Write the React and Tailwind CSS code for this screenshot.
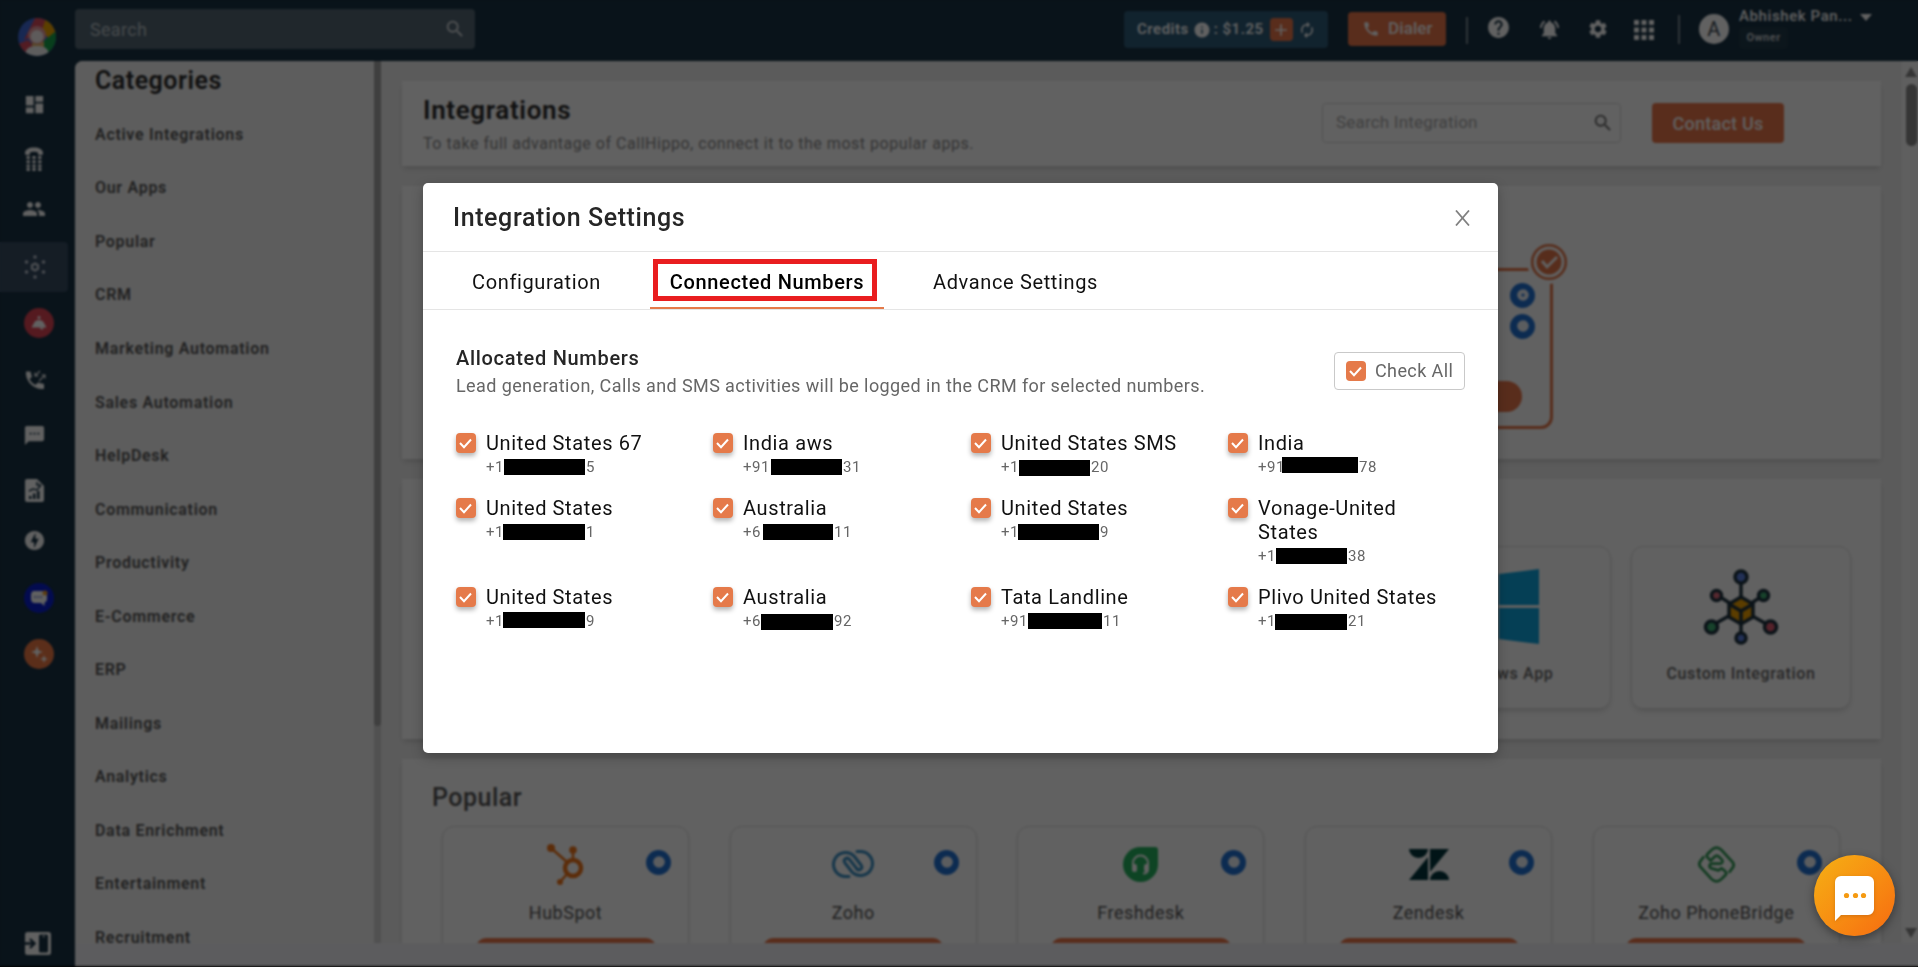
import React from 'react';
import {
  MdDashboard,
  MdGroup,
  MdSms,
  MdOfflineBolt,
  MdSearch,
  MdInfo,
  MdAdd,
  MdAutorenew,
  MdCall,
  MdHelp,
  MdNotificationsActive,
  MdSettings,
  MdApps,
} from 'react-icons/md';

const categories = [
  'Active Integrations',
  'Our Apps',
  'Popular',
  'CRM',
  'Marketing Automation',
  'Sales Automation',
  'HelpDesk',
  'Communication',
  'Productivity',
  'E-Commerce',
  'ERP',
  'Mailings',
  'Analytics',
  'Data Enrichment',
  'Entertainment',
  'Recruitment',
];

// start / end are the visible digits, pad and bar size the masked part
const numbers = [
  { name: 'United States 67', start: '+1', pad: 18, bar: 81, end: '5', top: 0 },
  { name: 'India aws', start: '+91', pad: 28, bar: 71, end: '31', top: 0 },
  { name: 'United States SMS', start: '+1', pad: 18, bar: 71, end: '20', top: 1 },
  { name: 'India', start: '+91', pad: 24, bar: 76, end: '78', top: -2 },
  { name: 'United States', start: '+1', pad: 17, bar: 82, end: '1', top: 0 },
  { name: 'Australia', start: '+6', pad: 20, bar: 70, end: '11', top: 0 },
  { name: 'United States', start: '+1', pad: 17, bar: 81, end: '9', top: 0 },
  { name: 'Vonage-United States', start: '+1', pad: 18, bar: 71, end: '38', top: 0 },
  { name: 'United States', start: '+1', pad: 17, bar: 82, end: '9', top: -1 },
  { name: 'Australia', start: '+6', pad: 18, bar: 72, end: '92', top: 1 },
  { name: 'Tata Landline', start: '+91', pad: 27, bar: 74, end: '11', top: 0 },
  { name: 'Plivo United States', start: '+1', pad: 17, bar: 72, end: '21', top: 1 },
];

function LogoIcon() {
  return (
    <svg className="w-[38px] h-[38px]" viewBox="0 0 38 38">
      <clipPath id="logo">
        <circle cx="19" cy="19" r="19" />
      </clipPath>
      <g clipPath="url(#logo)">
        <rect width="38" height="38" fill="#3f6ad8" />
        <path d="M17 0H30L24 14 6 22Z" fill="#d84a5c" />
        <path d="M28 0H38V15L30 20 24 12Z" fill="#f0a500" />
        <path d="M38 13V38H28L22 26Z" fill="#16a34a" />
        <path d="M0 26 10 22 16 28 10 38H0Z" fill="#d84a5c" />
        <path d="M14 24h12v6H14z" fill="#e8b86a" />
        <circle cx="19" cy="17" r="9" fill="#e79a9e" />
        <circle cx="19" cy="18.500" r="6.500" fill="#f7eeee" />
        <path d="M7 38C7 30 12 28 19 28s12 2 12 10Z" fill="#f4f4f4" />
      </g>
    </svg>
  );
}

function DialpadPhoneIcon() {
  return (
    <svg className="w-[18px] h-[24px]" viewBox="0 0 18 24" fill="currentColor">
      <path d="M0 6C0 2.500 4 .5 9 .5s9 2 9 5.500c0 1.500-.5 2-1.500 2h-2C13.500 8 13 7.500 13 6.500V5.500c-2-1-6-1-8 0v1C5 7.500 4.500 8 3.500 8h-2C.5 8 0 7.500 0 6Z" />
      {[9, 13.2, 17.4, 21].map((y) =>
        [1.5, 7.3, 13.1].map((x) => (
          <rect key={`${x}-${y}`} x={x} y={y} width="3.400" height="3" rx=".8" />
        ))
      )}
    </svg>
  );
}

function HubIcon() {
  return (
    <svg className="w-[22px] h-[24px]" viewBox="0 0 22 24" fill="currentColor">
      <path
        d="M11 8.500l3 1.700v3.600l-3 1.700-3-1.700v-3.600Z"
        fill="none"
        stroke="currentColor"
        strokeWidth="2.200"
      />
      <circle cx="11" cy="2" r="1.800" />
      <circle cx="11" cy="22" r="1.800" />
      <circle cx="2.500" cy="7" r="1.800" />
      <circle cx="19.500" cy="7" r="1.800" />
      <circle cx="2.500" cy="17" r="1.800" />
      <circle cx="19.500" cy="17" r="1.800" />
    </svg>
  );
}

function CallLogIcon() {
  return (
    <svg className="w-[22px] h-[20px]" viewBox="0 0 22 20">
      <path
        d="M1 1.500h4.500L7 7 4.500 9c1.500 3 3 4.500 6 6l2.500-2.500 6 1.500v5C9 20 0 11 1 1.500Z"
        fill="currentColor"
      />
      <path
        d="M15 1l-5 5M10 2.500V6h3.500M14 11l6-6M16.500 5H20v3.500"
        stroke="currentColor"
        strokeWidth="1.100"
        fill="none"
      />
    </svg>
  );
}

function ReportIcon() {
  return (
    <svg className="w-[19px] h-[23px]" viewBox="0 0 19 23">
      <path d="M2 0H12l7 7v14a2 2 0 0 1-2 2H2a2 2 0 0 1-2-2V2a2 2 0 0 1 2-2Z" fill="currentColor" />
      <path
        d="M4 12l4-2 4 1 4-5M12 3v3h4"
        stroke="#183244"
        strokeWidth="1.500"
        fill="none"
      />
      <path d="M4 17h2.500v3H4zM8 14.500h2.500V20H8zM12 12h2.500v8H12z" fill="#183244" />
    </svg>
  );
}

function RailItem({ className = '', children }) {
  return <div className={`flex items-center justify-center text-white ${className}`}>{children}</div>;
}

function Rail() {
  return (
    <div className="w-[75px] shrink-0 flex flex-col items-start">
      <div className="ml-[18px] mt-[18px] h-[38px]">
        <LogoIcon />
      </div>
      <RailItem className="ml-[23px] mt-[37px] h-[22px]">
        <MdDashboard size={23} />
      </RailItem>
      <RailItem className="ml-[25px] mt-[32px] h-[24px]">
        <DialpadPhoneIcon />
      </RailItem>
      <RailItem className="ml-[22px] mt-[26px] h-[24px]">
        <MdGroup size={24} />
      </RailItem>
      <RailItem className="mt-[21px] h-[50px] w-[68px] rounded-r bg-[#374c63] pl-[2px] !text-[#c5ccd6]">
        <HubIcon />
      </RailItem>
      <RailItem className="ml-[24px] mt-[16px] w-[30px] h-[30px] rounded-full bg-[#e04455]">
        <svg className="w-[16px] h-[16px]" viewBox="0 0 16 16" fill="#fff">
          <circle cx="8" cy="2.500" r="1.500" />
          <path d="M3 8c1-4 9-4 10 0l2.500 4.500H.5Z" />
          <path d="M8 12.500h5l-2 2.500Z" />
        </svg>
      </RailItem>
      <RailItem className="ml-[25px] mt-[31px] h-[22px]">
        <CallLogIcon />
      </RailItem>
      <RailItem className="ml-[23px] mt-[32px] h-[24px]">
        <MdSms size={23} />
      </RailItem>
      <RailItem className="ml-[25px] mt-[31px] h-[24px]">
        <ReportIcon />
      </RailItem>
      <RailItem className="ml-[23px] mt-[26px] h-[24px]">
        <MdOfflineBolt size={23} />
      </RailItem>
      <RailItem className="ml-[24px] mt-[31px] w-[30px] h-[30px] rounded-full bg-[#0a1fd0]">
        <svg className="w-[18px] h-[16px]" viewBox="0 0 18 16">
          <path d="M4 1h8c3 0 5 2 5 5v3c0 2-1 3-2.500 3.500L14.500 16 11 13H5c-3 0-4-2-4-4V5c0-2 1-4 3-4Z" fill="#fff" />
          <path d="M4 7h9" stroke="#6f80d0" strokeWidth="1.500" strokeDasharray="2 1" />
          <circle cx="15" cy="3" r="2.500" fill="#f0a030" />
        </svg>
      </RailItem>
      <RailItem className="ml-[24px] mt-[26px] w-[30px] h-[30px] rounded-full bg-[#f07a45]">
        <svg className="w-[18px] h-[18px]" viewBox="0 0 18 18" fill="#fff">
          <path d="M7 1l1.600 4.400L13 7 8.600 8.600 7 13 5.400 8.600 1 7l4.400-1.600Z" />
          <path d="M14 10l1 3 3 1-3 1-1 3-1-3-3-1 3-1Z" />
        </svg>
      </RailItem>
      <RailItem className="ml-[25px] mt-[262px] h-[24px]">
        <svg className="w-[26px] h-[23px]" viewBox="0 0 26 23">
          <rect width="26" height="23" rx="2.500" fill="#fff" />
          <rect x="14" y="2.500" width="9" height="18" rx="1.500" fill="#183244" />
          <rect x="17.500" y="2.500" width="2.500" height="3" fill="#8a97a2" />
          <path d="M0 11.500h9M5 7l4.500 4.500L5 16" stroke="#183244" strokeWidth="2.400" fill="none" />
        </svg>
      </RailItem>
    </div>
  );
}

function Header() {
  return (
    <div className="h-[61px] shrink-0 flex items-start text-white">
      <div className="mt-[9px] w-[400px] h-[40px] rounded bg-white/26 flex items-center justify-between pl-[15px] pr-[9px]">
        <span className="text-[18px] tracking-[0.3px] text-[#b9c1c6]">Search</span>
        <MdSearch size={22} className="text-[#d5d9dc]" />
      </div>
      <div className="mt-[11px] ml-[649px] w-[204px] h-[37px] shrink-0 rounded bg-[#2f5c79] flex items-center pl-[13px] text-[15px] font-semibold whitespace-nowrap">
        Credits
        <MdInfo size={18} className="ml-[4px] mr-[3px]" />: $1.25
        <span className="ml-[6px] w-[23px] h-[23px] rounded bg-[#ea764a] flex items-center justify-center">
          <MdAdd size={20} />
        </span>
        <MdAutorenew size={18} className="ml-[5px]" />
      </div>
      <div className="mt-[12px] ml-[20px] w-[98px] h-[34px] shrink-0 rounded bg-[#ea764a] flex items-center pl-[14px] text-[17px] tracking-[0.1px] font-medium">
        <MdCall size={18} className="mr-[8px]" />
        Dialer
      </div>
      <div className="mt-[17px] ml-[20px] w-[2px] h-[27px] shrink-0 bg-[#7d8b95]" />
      <MdHelp size={25} className="mt-[15px] ml-[18px] shrink-0" />
      <MdNotificationsActive size={23} className="mt-[18px] ml-[27px] shrink-0" />
      <MdSettings size={22} className="mt-[18px] ml-[26px] shrink-0" />
      <MdApps size={30} className="mt-[15px] ml-[20px] shrink-0" />
      <div className="mt-[15px] ml-[19px] w-[2px] h-[29px] shrink-0 bg-[#7d8b95]" />
      <div className="mt-[14px] ml-[19px] w-[30px] h-[30px] shrink-0 rounded-full bg-white flex items-center justify-center text-[20px] text-[#3d4a54]">
        A
      </div>
      <div className="ml-[10px] mt-[6px] w-[112px] shrink-0">
        <div className="text-[15px] leading-[21px] tracking-[0.6px] font-medium whitespace-nowrap">
          Abhishek Pan...
        </div>
        <div className="w-[49px] h-[22px] rounded bg-[#213a4a] text-[11px] leading-[22px] text-center font-semibold text-[#cfd4d8]">
          Owner
        </div>
      </div>
      <div className="mt-[14px] ml-[9px] shrink-0 border-x-[6px] border-x-transparent border-t-[7px] border-t-white" />
    </div>
  );
}

function Categories() {
  return (
    <div className="w-[306px] shrink-0 h-[882px] flex bg-[#f5f5f5] rounded-tl-lg overflow-hidden">
      <div className="w-[299px] pl-[20px]">
        <h2 className="h-[47px] pt-[3.500px] text-[25px] leading-[32px] font-semibold text-[#2b2b2b]">
          Categories
        </h2>
        {categories.map((item) => (
          <div
            key={item}
            className="h-[53.560px] flex items-center text-[16px] tracking-[0.7px] font-semibold text-[#555]"
          >
            {item}
          </div>
        ))}
      </div>
      <div className="w-[7px] bg-[#d4d4d4]">
        <div className="h-[665px] rounded-b bg-[#a5a5a5]" />
      </div>
    </div>
  );
}

function GearDot({ hole = false }) {
  return (
    <svg className="w-[25px] h-[25px]" viewBox="0 0 25 25">
      <circle cx="12.500" cy="12.500" r="12.500" fill="#2172d4" />
      <circle cx="13" cy="12" r="5.800" fill="#f0f4fa" />
      {hole && <circle cx="13" cy="12" r="1.600" fill="#2172d4" />}
    </svg>
  );
}

function WindowsIcon() {
  return (
    <svg className="w-[75px] h-[75px]" viewBox="0 0 75 75" fill="#0ea5e0">
      <path d="M0 11l32-5v30H0ZM35 5l40-5v36H35ZM0 39h32v30L0 64ZM35 39h40v36l-40-5Z" />
    </svg>
  );
}

function CustomIntegrationIcon() {
  return (
    <svg className="w-[76px] h-[76px]" viewBox="0 0 76 76" stroke="#1e3340" strokeWidth="3.500">
      <path d="M38 8v60M14 26l11 7 26 15 16 9M61 26l-11 7-26 15-16 9" fill="none" />
      <path d="M38 28l12 7v13l-12 7-12-7V35Z" fill="#f0a000" />
      <path d="M26 35l12 7 12-7M38 42v13" fill="none" />
      <circle cx="38" cy="8" r="6" fill="#5a7fe0" />
      <circle cx="38" cy="69" r="5" fill="#5a7fe0" />
      <circle cx="13.500" cy="26.500" r="5" fill="#e06a7c" />
      <circle cx="60.500" cy="26.500" r="5" fill="#3fae72" />
      <circle cx="8.500" cy="58" r="6" fill="#3fae72" />
      <circle cx="67.500" cy="58" r="6" fill="#e05a70" />
    </svg>
  );
}

function HubSpotIcon() {
  return (
    <svg className="w-[37px] h-[41px]" viewBox="0 0 37 41" stroke="#f0761c" fill="none">
      <circle cx="26" cy="24" r="8" strokeWidth="4.500" />
      <path d="M26 6v11M4 4l16 14M20 30l-7 8" strokeWidth="2.600" />
      <g fill="#f0761c" stroke="none">
        <circle cx="4" cy="4" r="4" />
        <circle cx="26" cy="6" r="3.800" />
        <circle cx="13" cy="38" r="3" />
      </g>
    </svg>
  );
}

function ZohoIcon() {
  return (
    <svg className="w-[42px] h-[28px]" viewBox="0 0 42 28" fill="none" stroke="#3a8fc4" strokeWidth="3" strokeLinecap="round">
      <path d="M17 26.500h-4A12 12 0 1 1 22 6l7 9c2.500 3.500-2 6.500-4.500 3.500" />
      <path d="M25 1.500h4A12 12 0 1 1 20 22l-7-9c-2.500-3.500 2-6.500 4.500-3.500l8 10" />
    </svg>
  );
}

function FreshdeskIcon() {
  return (
    <svg className="w-[35px] h-[35px]" viewBox="0 0 35 35">
      <path d="M17.500 0H32a3 3 0 0 1 3 3v14.500A17.500 17.500 0 1 1 17.500 0Z" fill="#25b35f" />
      <path d="M10 20v-4a7.500 7.500 0 0 1 15 0v4M25 22c0 3-2 4.500-5 4.500" fill="none" stroke="#fff" strokeWidth="2" />
      <rect x="9" y="17" width="5" height="8" rx="2" fill="#fff" />
      <rect x="21" y="17" width="5" height="8" rx="2" fill="#fff" />
    </svg>
  );
}

function ZendeskIcon() {
  return (
    <svg className="w-[40px] h-[31px]" viewBox="0 0 40 31" fill="#03363d">
      <path d="M0 0h19a9.500 9 0 0 1-19 0ZM19 8v23H0ZM21 0h19L21 23ZM21 31a9.500 9 0 0 1 19 0Z" />
    </svg>
  );
}

function PhoneBridgeIcon() {
  return (
    <svg className="w-[37px] h-[37px]" viewBox="0 0 38 38" fill="none" stroke="#2f9a55" strokeWidth="2.800" strokeLinecap="round" strokeLinejoin="round">
      <path d="M5.500 11.500l-3 4c-1.500 2-1.500 4 0 6L14 34c3 3 7 3 10 0l4-4c2-2 1-3-1-5l-3-2" />
      <path d="M32.500 26.500l3-4c1.500-2 1.500-4 0-6L24 4c-3-3-7-3-10 0l-4 4c-2 2-1 3 1 5l2 2" />
      <path d="M13 15l4-4c1.500-1.500 3-1.500 4.500 0l3 3c1.500 1.500.5 4-1.500 4h-8c-4 0-4 4-1 5l7 2 3-2" />
    </svg>
  );
}

const popularApps = [
  { name: 'HubSpot', icon: <HubSpotIcon /> },
  { name: 'Zoho', icon: <ZohoIcon /> },
  { name: 'Freshdesk', icon: <FreshdeskIcon /> },
  { name: 'Zendesk', icon: <ZendeskIcon /> },
  { name: 'Zoho PhoneBridge', icon: <PhoneBridgeIcon /> },
];

function Main() {
  return (
    <div className="flex-1 h-[882px] flex bg-[#efefef] overflow-hidden">
      <div className="flex-1 pl-[21px] pr-[21px] pt-[20px]">
        {/* Page title */}
        <div className="h-[85px] bg-white shadow-md flex">
          <div className="ml-[21px] w-[899px]">
            <h1 className="mt-[11px] text-[26px] leading-[36px] tracking-[0.65px] font-semibold text-[#2b2b2b]">
              Integrations
            </h1>
            <p className="mt-[5px] text-[16px] leading-[22px] tracking-[0.53px] text-[#8a8a8a] whitespace-nowrap">
              To take full advantage of CallHippo, connect it to the most popular apps.
            </p>
          </div>
          <div className="mt-[22px] w-[299px] h-[40px] border border-[#d9d9d9] rounded flex items-center justify-between pl-[13px] pr-[6px]">
            <span className="text-[17px] tracking-[0.2px] text-[#a8a8a8]">Search Integration</span>
            <MdSearch size={22} className="text-[#6a6a6a]" />
          </div>
          <div className="mt-[22px] ml-[31px] w-[132px] h-[40px] rounded bg-[#ea764a] text-white text-[18px] tracking-[0.25px] font-medium flex items-center justify-center">
            Contact Us
          </div>
        </div>

        {/* Active integration */}
        <div className="mt-[20px] h-[273px] bg-white shadow-md flex justify-end pr-[328px] pt-[82px]">
          <div className="relative w-[240px] h-[161px] rounded-[12px] border-[3px] border-[#e5774a] flex flex-col items-end pr-[15px] pt-[12px]">
            <GearDot hole />
            <div className="h-[6px]" />
            <GearDot />
            <div className="mt-[42px] mr-[13px] w-[180px] h-[31px] shrink-0 rounded-full bg-[#ea764a]" />
            <svg className="absolute -top-[32px] -right-[22px] w-[46px] h-[46px]" viewBox="0 0 46 46">
              <circle cx="23" cy="23" r="22" fill="#fff" />
              <circle cx="23" cy="23" r="16.800" fill="none" stroke="#e5774a" strokeWidth="2.600" />
              <circle cx="23" cy="23" r="12.500" fill="#e5774a" />
              <path d="M16 22l5 6 10-10" fill="none" stroke="#fff" strokeWidth="2.800" />
            </svg>
          </div>
        </div>

        {/* Our apps */}
        <div className="mt-[20px] h-[260px] bg-white shadow-md flex justify-end gap-[20px] pr-[30px] pt-[67px]">
          <div className="w-[220px] h-[163px] rounded-[12px] border border-[#dedede] shadow-md flex flex-col items-center pt-[22px] text-[16px] tracking-[0.65px] font-medium text-[#666]">
            <WindowsIcon />
            <span className="mt-[18px]">Windows App</span>
          </div>
          <div className="w-[220px] h-[163px] rounded-[12px] border border-[#dedede] shadow-md flex flex-col items-center pt-[22px] text-[16px] tracking-[0.65px] font-medium text-[#666]">
            <CustomIntegrationIcon />
            <span className="mt-[17px]">Custom Integration</span>
          </div>
        </div>

        {/* Popular */}
        <div className="mt-[20px] h-[400px] bg-white shadow-md pt-[21px]">
          <h2 className="ml-[30px] text-[25px] leading-[36px] font-medium text-[#555]">Popular</h2>
          <div className="mt-[10px] ml-[40px] flex gap-[40.700px]">
            {popularApps.map((app) => (
              <div
                key={app.name}
                className="relative w-[247px] h-[200px] shrink-0 rounded-[12px] border border-[#dedede] shadow flex flex-col items-center text-[18px] text-[#555]"
              >
                <div className="mt-[12px] h-[50px] flex items-center">{app.icon}</div>
                <span className="absolute top-[23px] right-[17px]">
                  <GearDot />
                </span>
                <span className="mt-[10px]">{app.name}</span>
                <div className="mt-[12px] w-[180px] h-[40px] rounded-[10px] bg-[#ea764a]" />
              </div>
            ))}
          </div>
        </div>
      </div>
      {/* Scrollbar */}
      <div className="w-[16px] bg-[#fafafa] flex flex-col items-center pl-[2px]">
        <div className="mt-[6px] border-x-[6px] border-x-transparent border-b-[10px] border-b-[#8b8b8b]" />
        <div className="mt-[7px] w-[11px] h-[62px] rounded-full bg-[#8b8b8b]" />
        <div className="mt-[782px] border-x-[6px] border-x-transparent border-t-[10px] border-t-[#8b8b8b]" />
      </div>
    </div>
  );
}

function CheckBox({ shadow = true }) {
  return (
    <span
      className={`w-[20px] h-[20px] shrink-0 rounded-[4px] bg-[#e57a4a] flex items-center justify-center ${
        shadow ? 'shadow-[0_3px_5px_rgba(0,0,0,0.3)]' : ''
      }`}
    >
      <svg className="w-[14px] h-[12px]" viewBox="0 0 14 12">
        <path d="M1 6l4 4.200L12 2.500" fill="none" stroke="#fff" strokeWidth="2" />
      </svg>
    </span>
  );
}

function Modal() {
  return (
    <div className="w-[1075px] h-[570px] bg-white rounded-[5px] shadow-[0_4px_12px_rgba(0,0,0,0.25)] flex flex-col">
      <div className="h-[69px] shrink-0 border-b border-[#e5e5e5] flex items-center justify-between pl-[30px] pr-[28px]">
        <h3 className="pt-[1px] text-[25px] tracking-[0.6px] font-medium text-[#262626]">Integration Settings</h3>
        <svg className="w-[15px] h-[16px] mt-[2px]" viewBox="0 0 15 16">
          <path d="M1 .5l13 15M14 .5l-13 15" stroke="#808080" strokeWidth="1.800" />
        </svg>
      </div>

      {/* Tabs */}
      <div className="h-[58px] shrink-0 border-b border-[#e5e5e5] flex text-[20px] tracking-[0.64px] text-[#111]">
        <div className="ml-[49px] pt-[15px]">Configuration</div>
        <div className="relative ml-[49px] w-[234px] h-[57px] pt-[15px] border-b-2 border-[#e57a4a] text-center font-medium text-black">
          Connected Numbers
          <span className="absolute left-[3px] top-[7px] w-[224px] h-[42px] border-[5px] border-[#e91d1f]" />
        </div>
        <div className="ml-[49px] pt-[15px]">Advance Settings</div>
      </div>

      {/* Allocated numbers */}
      <div className="pl-[33px] pr-[33px] pt-[34px] flex justify-between">
        <div>
          <div className="text-[20px] leading-[28px] tracking-[0.7px] font-medium text-[#262626]">
            Allocated Numbers
          </div>
          <div className="text-[18px] leading-[28px] tracking-[0.4px] text-[#666]">
            Lead generation, Calls and SMS activities will be logged in the CRM for selected numbers.
          </div>
        </div>
        <div className="mt-[8px] w-[131px] h-[38px] border border-[#c9c9c9] rounded-[4px] flex items-center pl-[11px] text-[18px] tracking-[0.4px] text-[#666]">
          <CheckBox shadow={false} />
          <span className="ml-[9px] pb-[1px]">Check All</span>
        </div>
      </div>

      <div className="mt-[31px] ml-[33px] grid grid-cols-[257px_258px_257px_237px] gap-y-[17px]">
        {numbers.map((n, i) => (
          <div key={i} className="flex items-start">
            <div className="mt-[2px]">
              <CheckBox />
            </div>
            <div className="ml-[10px] w-[190px]">
              <div className="text-[20px] leading-[24px] tracking-[0.62px] text-[#111]">{n.name}</div>
              <div className="h-[24px] flex items-center text-[15px] text-[#666] whitespace-nowrap">
                <span style={{ width: n.pad }}>{n.start}</span>
                <span
                  className="h-[16px] bg-black"
                  style={{ width: n.bar, transform: `translateY(${n.top}px)` }}
                />
                <span className="ml-px">{n.end}</span>
              </div>
            </div>
          </div>
        ))}
      </div>
    </div>
  );
}

export default function App() {
  return (
    <div className="relative w-[1918px] h-[967px] overflow-hidden bg-black font-[Roboto,sans-serif] tracking-[0.5px]">
      <div className="h-[966px] flex bg-[#183244]">
        <Rail />
        <div className="flex-1 flex flex-col">
          <Header />
          <div className="h-[905px] bg-[#f2f2f6] rounded-tl-lg">
            <div className="flex">
              <Categories />
              <Main />
            </div>
          </div>
        </div>
      </div>

      {/* Dimmed backdrop with the dialog on top */}
      <div className="absolute inset-0 bg-black/62 backdrop-blur-[1.2px]" />
      <div className="absolute inset-0 pl-[423px] pt-[183px]">
        <Modal />
      </div>

      {/* Chat launcher */}
      <div className="absolute left-[1814px] top-[855px] w-[81px] h-[81px] rounded-full bg-gradient-to-br from-[#f5b014] to-[#f66a10] shadow-[0_3px_10px_rgba(0,0,0,0.4)] flex items-center justify-center">
        <svg className="w-[39px] h-[45px] mt-[6px] drop-shadow" viewBox="0 0 39 45">
          <path d="M6 0h27a6 6 0 0 1 6 6v27a6 6 0 0 1-6 6H6L0 45V6a6 6 0 0 1 6-6Z" fill="#fff" />
          <g fill="#f59a12">
            <circle cx="11.500" cy="19.500" r="2.600" />
            <circle cx="20.500" cy="19.500" r="2.600" />
            <circle cx="28.500" cy="19.500" r="2.600" />
          </g>
        </svg>
      </div>
    </div>
  );
}
